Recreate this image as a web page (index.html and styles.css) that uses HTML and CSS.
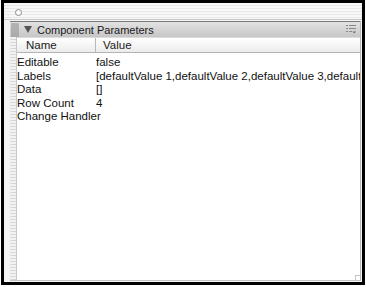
FILE: index.html
```html
<!DOCTYPE html>
<html>
<head>
<meta charset="utf-8">
<link rel="stylesheet" href="styles.css">
</head>
<body>
<div class="frame">
  <div class="titlebar">
    <span class="close"></span>
  </div>
  <div class="panel">
    <div class="panel-head">
      <span class="grip"></span>
      <span class="tri"></span>
      <span class="title">Component Parameters</span>
      <svg class="menu" width="10" height="9" viewBox="0 0 10 9">
        <rect x="0" y="0" width="2" height="1" fill="#8a8a8a"/>
        <rect x="3" y="0" width="7" height="1" fill="#8a8a8a"/>
        <rect x="0" y="3" width="2" height="1" fill="#8a8a8a"/>
        <rect x="3" y="3" width="7" height="1" fill="#8a8a8a"/>
        <rect x="0" y="6" width="2" height="1" fill="#8a8a8a"/>
        <rect x="3" y="6" width="3" height="1" fill="#8a8a8a"/>
        <path d="M6.5 6.5 L10 6.5 L8.25 8.5 Z" fill="#6a6a6a"/>
      </svg>
    </div>
    <div class="body">
      <div class="strip"></div>
      <div class="grid">
        <div class="cols">
          <div class="col name-col">Name</div>
          <div class="col value-col">Value</div>
        </div>
        <div class="rows">
          <div class="row"><span class="k">Editable</span><span class="v">false</span></div>
          <div class="row"><span class="k">Labels</span><span class="v">[defaultValue 1,defaultValue 2,defaultValue 3,defaultValue 4]</span></div>
          <div class="row"><span class="k">Data</span><span class="v">[]</span></div>
          <div class="row"><span class="k">Row Count</span><span class="v">4</span></div>
          <div class="row"><span class="k">Change Handler</span><span class="v"></span></div>
        </div>
        <span class="resize"></span>
      </div>
    </div>
  </div>
</div>
</body>
</html>
```

FILE: styles.css
```css
html, body {
  margin: 0;
  padding: 0;
  background: #fff;
}
body {
  width: 366px;
  height: 287px;
  overflow: hidden;
  font-family: "Liberation Sans", Arial, sans-serif;
}
.frame {
  box-sizing: border-box;
  margin-left: 1px;
  width: 364px;
  height: 285px;
  border: 3px solid #000;
  background: #f4f4f4;
  display: flex;
  flex-direction: column;
}
.titlebar {
  position: relative;
  height: 17px;
  flex: none;
  background: repeating-linear-gradient(to bottom, #f8f8f8 0, #f8f8f8 2px, #e8e8e8 2px, #e8e8e8 3px);
  border-bottom: 1px solid #c8c8c8;
  box-sizing: border-box;
}
.close {
  position: absolute;
  left: 11px;
  top: 6px;
  width: 5px;
  height: 5px;
  border: 1px solid #8a8a8a;
  border-radius: 50%;
  background: #fff;
}
.panel {
  flex: 1;
  display: flex;
  flex-direction: column;
  margin: 1px 1px 1px 6px;
  border-right: 1px solid #b8b8b8;
  border-bottom: 1px solid #c4c4c4;
  background: #fff;
}
.panel-head {
  height: 16px;
  flex: none;
  display: flex;
  align-items: center;
  border-top: 1px solid #7a7a7a;
  background: linear-gradient(to bottom, #e2e2e2, #c6c6c6);
  box-sizing: border-box;
}
.grip {
  width: 8px;
  height: 14px;
  margin-left: 1px;
  background-image: radial-gradient(circle, #9a9a9a 0.6px, transparent 0.9px);
  background-size: 2px 2px;
}
.tri {
  width: 0;
  height: 0;
  margin-left: 5px;
  border-left: 4px solid transparent;
  border-right: 4px solid transparent;
  border-top: 7px solid #555;
}
.title {
  margin-left: 5px;
  font-size: 11px;
  color: #1a1a1a;
}
.menu {
  margin-left: auto;
  margin-right: 4px;
}
.body {
  flex: 1;
  display: flex;
  min-height: 0;
}
.strip {
  width: 6px;
  flex: none;
  background: repeating-linear-gradient(to bottom, #f2f2f2 0, #f2f2f2 2px, #d8d8d8 2px, #d8d8d8 3px);
  border-right: 1px solid #c8c8c8;
}
.grid {
  position: relative;
  flex: 1;
  min-width: 0;
  display: flex;
  flex-direction: column;
  overflow: hidden;
}
.cols {
  height: 16px;
  display: flex;
  background: linear-gradient(to bottom, #ffffff, #ececec);
  border-bottom: 1px solid #b4b4b4;
  border-top: 1px solid #dcdcdc;
  box-sizing: border-box;
  font-size: 11.5px;
  color: #1a1a1a;
  line-height: 15px;
}
.col {
  box-sizing: border-box;
}
.name-col {
  width: 79px;
  padding-left: 9px;
  border-right: 1px solid #b8b8b8;
}
.value-col {
  padding-left: 7px;
}
.rows {
  padding-top: 3px;
  font-size: 11.5px;
  color: #111;
}
.row {
  display: flex;
  height: 13.5px;
  line-height: 13.5px;
  white-space: nowrap;
}
.k {
  width: 79px;
  flex: none;
}
.v {
  flex: none;
}
.resize {
  position: absolute;
  right: 0;
  bottom: 0;
  width: 4px;
  height: 4px;
  border-left: 1px solid #c4c4c4;
  border-top: 1px solid #c4c4c4;
}
```
